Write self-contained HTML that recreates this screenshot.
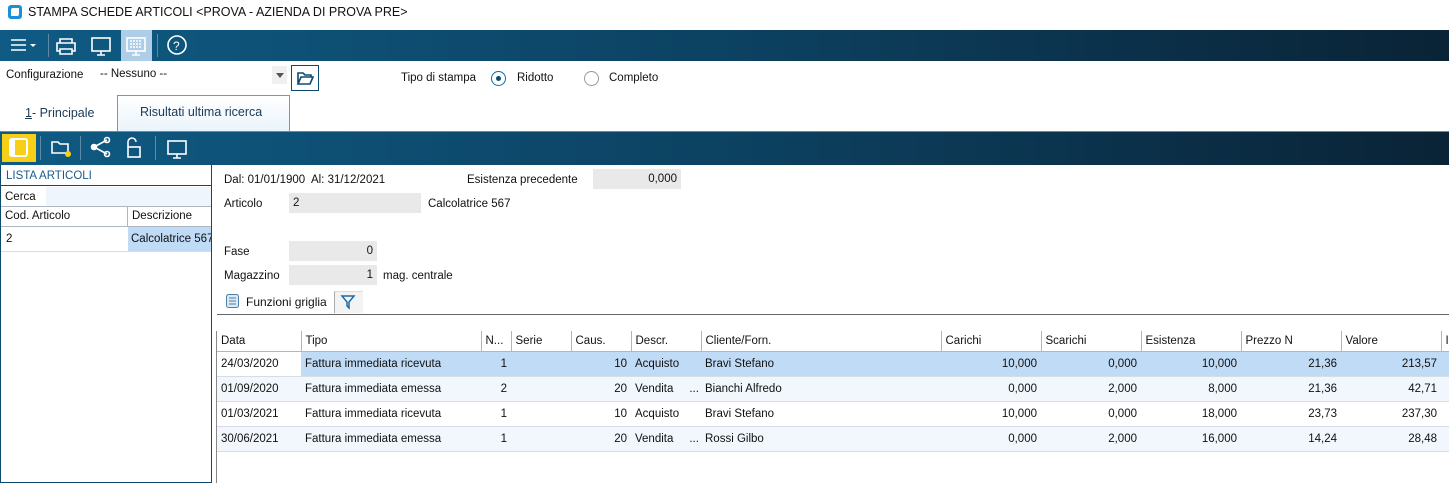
<!DOCTYPE html>
<html><head><style>
*{margin:0;padding:0;box-sizing:border-box}
body{width:1449px;height:483px;overflow:hidden;background:#fff;font-family:"Liberation Sans",sans-serif;font-size:11.5px;color:#111;position:relative}
.a{position:absolute;white-space:nowrap}
.bar{background:linear-gradient(90deg,#0f5b84 0%,#0c3f5e 55%,#0a2336 100%)}
.fld{position:absolute;background:#e9e9e9;height:20px;line-height:20px;padding:0 4px}
table{border-collapse:collapse;position:absolute;left:217px;top:331px;table-layout:fixed;width:1244px}
td{height:25px;padding:0 4px;white-space:nowrap;overflow:hidden;border-bottom:1px solid #d6dde6}
th{height:20px;font-weight:normal;text-align:left;padding:0 4px;border-right:1px solid #aeb6bf;border-bottom:1px solid #aeb6bf;background:#fff;white-space:nowrap;overflow:hidden}
.r{text-align:right}
tr.sel td{background:#bfdbf5}
tr.alt td{background:#f1f7fd}
</style></head><body>
<div class="a" style="left:8px;top:5px;width:14px;height:14px;background:#1b8fd8;border-radius:3px"></div>
<div class="a" style="left:11px;top:8px;width:8px;height:8px;background:#fff;border-radius:2px 0 2px 0"></div>
<div class="a" style="left:28px;top:5px;font-size:12.5px">STAMPA SCHEDE ARTICOLI &lt;PROVA - AZIENDA DI PROVA PRE&gt;</div>
<div class="a bar" style="left:0;top:30px;width:1449px;height:31px"></div>
<svg class="a" style="left:0;top:30px" width="200" height="31">
<g stroke="#fff" stroke-width="1.6" fill="none">
<path d="M11 10h15M11 15h15M11 20h15"/>
<path d="M60 13v-4h12v4M57 13h18v8h-3v-2h-12v2h-3z M60 19v5h12v-5"/>
<rect x="92" y="8" width="18" height="13"/><path d="M97 25h8M101 21v4"/>
<circle cx="177" cy="15" r="9"/>
</g>
<path d="M30 14l3 3 3-3z" fill="#fff"/>
<rect x="121" y="0" width="31" height="31" fill="#aecde6"/>
<rect x="127" y="8" width="18" height="13" fill="none" stroke="#fff" stroke-width="1.6"/>
<path d="M130 11h12M130 14h12M130 17h12" stroke="#fff" stroke-width="1.4" stroke-dasharray="2 1"/>
<path d="M132 25h8M136 21v4" stroke="#fff" stroke-width="1.6"/>
<text x="173" y="20" fill="#fff" font-size="12" font-family="Liberation Sans">?</text>
<rect x="48" y="4" width="1" height="23" fill="#5d8aa6"/>
<rect x="157" y="4" width="1" height="23" fill="#5d8aa6"/>
</svg>
<div class="a" style="left:6px;top:69px">Configurazione</div>
<div class="a" style="left:100px;top:68px">-- Nessuno --</div>
<div class="a" style="left:272px;top:66px;width:15px;height:18px;background:#f0f0f0"></div>
<div class="a" style="left:276px;top:73px;border:4px solid transparent;border-top:5px solid #555"></div>
<div class="a" style="left:291px;top:65px;width:28px;height:26px;border:1px solid #0e4a6e"></div>
<svg class="a" style="left:296px;top:70px" width="18" height="16"><path d="M2 3h5l2 2h6v2H5l-3 7z M2 14l3-7h12l-3 7z" fill="none" stroke="#0e4a6e" stroke-width="1.6"/></svg>
<div class="a" style="left:401px;top:72px">Tipo di stampa</div>
<div class="a" style="left:491px;top:71px;width:15px;height:15px;border:1px solid #0e6aa8;border-radius:50%"></div>
<div class="a" style="left:496px;top:76px;width:5px;height:5px;background:#0e4a6e;border-radius:50%"></div>
<div class="a" style="left:517px;top:72px">Ridotto</div>
<div class="a" style="left:584px;top:71px;width:15px;height:15px;border:1px solid #999;border-radius:50%"></div>
<div class="a" style="left:609px;top:72px">Completo</div>
<div class="a" style="left:25px;top:106px;font-size:12.5px;color:#1a3a55"><u>1</u>- Principale</div>
<div class="a" style="left:117px;top:95px;width:173px;height:36px;border:1px solid #6a9cc0;border-bottom:none;background:linear-gradient(#fff,#eaf4fc)"></div>
<div class="a" style="left:140px;top:105px;font-size:12.5px;color:#1a3a55">Risultati ultima ricerca</div>
<div class="a bar" style="left:0;top:131px;width:1449px;height:34px;border-top:1px solid #5f8eb0"></div>
<div class="a" style="left:2px;top:134px;width:34px;height:28px;background:#f7cf16"></div>
<div class="a" style="left:9px;top:138px;width:19px;height:19px;border:2px solid #fff;border-radius:3px;background:#f7cf16"></div>
<div class="a" style="left:11px;top:140px;width:4px;height:15px;background:#fff"></div>
<svg class="a" style="left:40px;top:133px" width="160" height="30">
<g stroke="#fff" stroke-width="1.6" fill="none">
<path d="M12 9h6l2 2h8v9H12z"/>
<path d="M54 14l13-7M54 14l13 7"/><circle cx="54" cy="14" r="2.5" fill="#fff"/><circle cx="67" cy="7" r="2.5"/><circle cx="67" cy="21" r="2.5"/>
<rect x="88" y="14" width="12" height="10"/><path d="M88 14v-5a4 4 0 0 1 8 0"/>
<rect x="128" y="8" width="18" height="13"/><path d="M133 25h8M137 21v4"/>
</g>
<circle cx="28" cy="21" r="3" fill="#f7cf16"/>
<rect x="0" y="3" width="1" height="24" fill="#5d8aa6"/>
<rect x="40" y="3" width="1" height="24" fill="#5d8aa6"/>
<rect x="115" y="3" width="1" height="24" fill="#5d8aa6"/>
</svg>
<div class="a" style="left:0;top:165px;width:212px;height:318px;border:1px solid #0e4a6e;border-top:none"></div>
<div class="a" style="left:1px;top:166px;width:210px;height:20px;border-bottom:1px solid #0e4a6e"></div>
<div class="a" style="left:6px;top:170px;color:#1c5a8a">LISTA ARTICOLI</div>
<div class="a" style="left:46px;top:187px;width:165px;height:19px;background:#eef5fc"></div>
<div class="a" style="left:5px;top:191px">Cerca</div>
<div class="a" style="left:1px;top:206px;width:210px;height:21px;border-top:1px solid #aeb6bf;border-bottom:1px solid #aeb6bf"></div>
<div class="a" style="left:127px;top:207px;width:1px;height:20px;background:#aeb6bf"></div>
<div class="a" style="left:5px;top:210px">Cod. Articolo</div>
<div class="a" style="left:132px;top:210px">Descrizione</div>
<div class="a" style="left:128px;top:227px;width:83px;height:24px;background:#bfdbf5;overflow:hidden;padding:6px 0 0 3px">Calcolatrice 567</div>
<div class="a" style="left:1px;top:251px;width:210px;height:1px;background:#d6dde6"></div>
<div class="a" style="left:6px;top:233px">2</div>
<div class="a" style="left:224px;top:174px">Dal: 01/01/1900&nbsp; Al: 31/12/2021</div>
<div class="a" style="left:467px;top:174px">Esistenza precedente</div>
<div class="fld" style="left:593px;top:169px;width:88px;text-align:right">0,000</div>
<div class="a" style="left:224px;top:198px">Articolo</div>
<div class="fld" style="left:289px;top:193px;width:132px">2</div>
<div class="a" style="left:428px;top:198px">Calcolatrice 567</div>
<div class="a" style="left:224px;top:246px">Fase</div>
<div class="fld" style="left:289px;top:241px;width:88px;text-align:right">0</div>
<div class="a" style="left:224px;top:270px">Magazzino</div>
<div class="fld" style="left:289px;top:265px;width:88px;text-align:right">1</div>
<div class="a" style="left:383px;top:270px">mag. centrale</div>
<svg class="a" style="left:225px;top:293px" width="16" height="16"><rect x="1.5" y="1.5" width="12" height="13" rx="2" fill="#dde8f3" stroke="#4d7fa8"/><path d="M4 5h7M4 8h7M4 11h7" stroke="#4d7fa8"/></svg>
<div class="a" style="left:246px;top:295px;font-size:12px">Funzioni griglia</div>
<div class="a" style="left:334px;top:291px;width:29px;height:22px;border-left:1px solid #aaa;border-top:1px solid #ddd;background:#f3f3f3"></div>
<svg class="a" style="left:340px;top:294px" width="16" height="16"><path d="M2 2h12l-5 6v6l-2-2V8z" fill="none" stroke="#1c6aa8" stroke-width="1.5"/></svg>
<div class="a" style="left:217px;top:314px;width:1232px;height:1px;background:#666"></div>
<div class="a" style="left:216px;top:331px;width:1233px;height:152px;border-left:1px solid #888;border-top:1px solid #888"></div>
<table>
<colgroup><col style="width:84px"><col style="width:180px"><col style="width:30px"><col style="width:60px"><col style="width:60px"><col style="width:70px"><col style="width:240px"><col style="width:100px"><col style="width:100px"><col style="width:100px"><col style="width:100px"><col style="width:100px"><col style="width:20px"></colgroup>
<tr><th>Data</th><th>Tipo</th><th>N...</th><th>Serie</th><th>Caus.</th><th>Descr.</th><th>Cliente/Forn.</th><th>Carichi</th><th>Scarichi</th><th>Esistenza</th><th>Prezzo N</th><th>Valore</th><th>I</th></tr>
<tr class="sel"><td style="background:#fff">24/03/2020</td><td>Fattura immediata ricevuta</td><td class="r">1</td><td></td><td class="r">10</td><td>Acquisto</td><td>Bravi Stefano</td><td class="r">10,000</td><td class="r">0,000</td><td class="r">10,000</td><td class="r">21,36</td><td class="r">213,57</td><td></td></tr>
<tr class="alt"><td>01/09/2020</td><td>Fattura immediata emessa</td><td class="r">2</td><td></td><td class="r">20</td><td>Vendita &nbsp;&nbsp;&nbsp;&nbsp;...</td><td>Bianchi Alfredo</td><td class="r">0,000</td><td class="r">2,000</td><td class="r">8,000</td><td class="r">21,36</td><td class="r">42,71</td><td></td></tr>
<tr><td>01/03/2021</td><td>Fattura immediata ricevuta</td><td class="r">1</td><td></td><td class="r">10</td><td>Acquisto</td><td>Bravi Stefano</td><td class="r">10,000</td><td class="r">0,000</td><td class="r">18,000</td><td class="r">23,73</td><td class="r">237,30</td><td></td></tr>
<tr class="alt"><td>30/06/2021</td><td>Fattura immediata emessa</td><td class="r">1</td><td></td><td class="r">20</td><td>Vendita &nbsp;&nbsp;&nbsp;&nbsp;...</td><td>Rossi Gilbo</td><td class="r">0,000</td><td class="r">2,000</td><td class="r">16,000</td><td class="r">14,24</td><td class="r">28,48</td><td></td></tr>
</table>
</body></html>
